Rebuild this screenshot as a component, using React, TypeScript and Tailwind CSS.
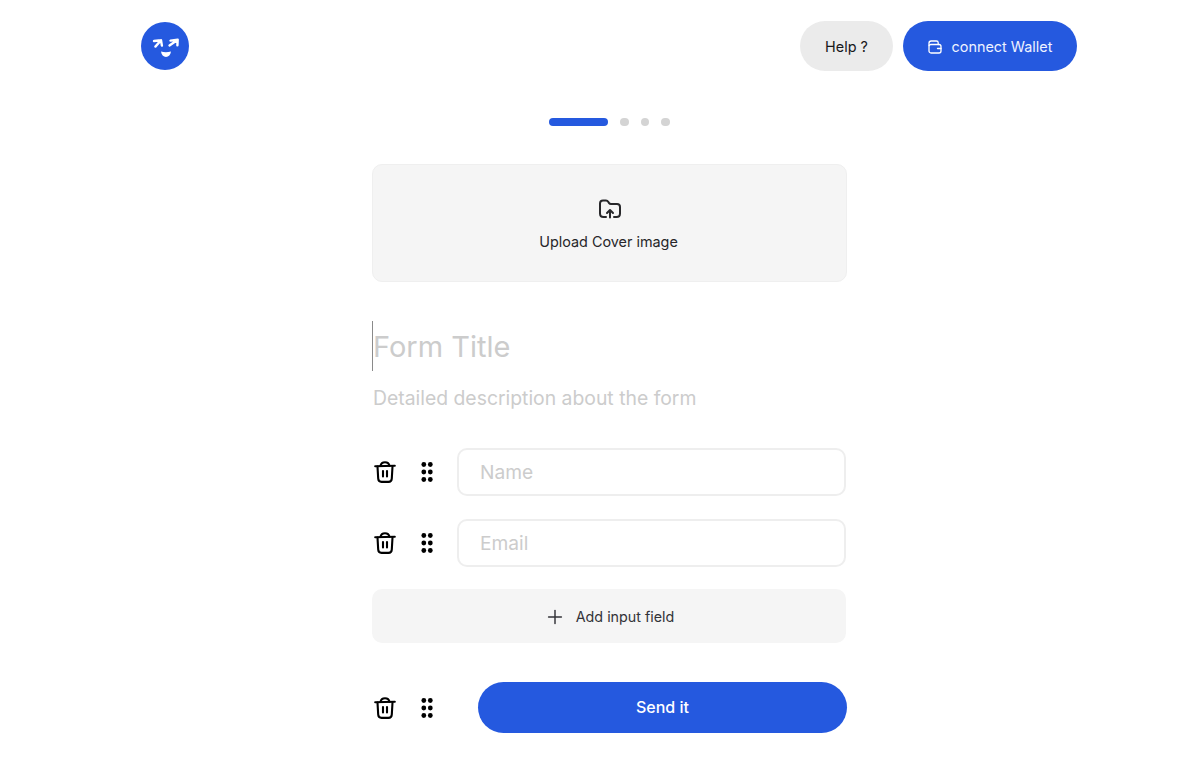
import { Plus } from 'lucide-react';

function Logo() {
  return (
    <svg width="48" height="48" viewBox="0 0 48 48" fill="none">
      <circle cx="24" cy="24" r="24" fill="#2559df" />
      <g stroke="#fff" strokeWidth="2.4" strokeLinecap="round" strokeLinejoin="round">
        <path d="M13 19l7-.8M20 18.2l.9 5.4M20 18.2l-5.6 6.4" />
        <path d="M29.5 18.6l7.2-.8M36.7 17.8l-.3 5.6M36.7 17.8l-8.2 5.6" />
      </g>
      <path d="M20 29.5c3.2.9 6.4.9 10 0-.4 3.400-2.400 5.500-5 5.500s-4.600-2.100-5-5.500z" fill="#fff" />
    </svg>
  );
}

function Trash() {
  return (
    <svg width="22" height="22" viewBox="0 0 22 22" fill="none" stroke="#000" strokeWidth="2.100" strokeLinecap="round" strokeLinejoin="round">
      <path d="M1.200 5.200L20.800 4.800" />
      <path d="M6.500 4.800C7 2.500 8.500 1.300 11 1.300s4 1.200 4.500 3.500" />
      <path d="M3.500 5.500l.7 12c.1 2.100 1.300 3.400 3.300 3.400h7c2 0 3.200-1.300 3.300-3.400l.7-12" />
      <path d="M9 10v5.500M13 10v5.500" />
    </svg>
  );
}

function Grip() {
  return (
    <svg width="12" height="20" viewBox="0 0 12 20" fill="#000">
      <circle cx="2.800" cy="2.500" r="2.400" />
      <circle cx="9.300" cy="2.500" r="2.400" />
      <circle cx="2.800" cy="10" r="2.400" />
      <circle cx="9.300" cy="10" r="2.400" />
      <circle cx="2.800" cy="17.500" r="2.400" />
      <circle cx="9.300" cy="17.500" r="2.400" />
    </svg>
  );
}

function FolderUp() {
  return (
    <svg width="24" height="24" viewBox="0 0 24 24" fill="none" stroke="#27272a" strokeWidth="2" strokeLinecap="round" strokeLinejoin="round">
      <path d="M8 20H5.500C3.500 20 2 18.500 2 16.500V6.500C2 4.700 3.200 3.500 5 3.500h3c1 0 1.700.4 2.200 1.200l.9 1.400c.4.600 1 .900 1.900.900h6c1.800 0 3 1.200 3 3v6.500c0 2-1.500 3.500-3.500 3.500H16" />
      <path d="M12 20.500v-7M9 16l3-3 3 3" />
    </svg>
  );
}

function WalletIcon() {
  return (
    <svg width="14" height="14" viewBox="0 0 14 14" fill="none" stroke="#fff" strokeWidth="1.300" strokeLinecap="round" strokeLinejoin="round">
      <path d="M1 5.500V3.200C1 1.900 1.900 1 3.200 1h5.200c1.100 0 1.800.7 1.800 1.800v1.700" />
      <rect x="1" y="4.500" width="12" height="8.500" rx="2" />
      <path d="M9.500 8.500H13" />
    </svg>
  );
}

function RowControls() {
  return (
    <div className="flex items-center shrink-0">
      <div className="w-[22px] ml-[2px] flex justify-center"><Trash /></div>
      <div className="ml-[25px] flex"><Grip /></div>
    </div>
  );
}

function Field({ placeholder }: { placeholder: string }) {
  return (
    <div className="flex items-center mr-[1px]">
      <RowControls />
      <div className="ml-[24px] flex-1 h-[48px] border-2 border-[#eeeeee] rounded-[10px] pl-[21px] pt-[1px] flex items-center text-[19.2px] text-[#cccccc]">
        {placeholder}
      </div>
    </div>
  );
}

export default function App() {
  return (
    <div className="min-h-screen bg-white font-['Inter',sans-serif]">
      <header className="pt-[21px] pl-[141px] pr-[122px] flex items-center justify-between">
        <Logo />
        <div className="flex items-center gap-[10px]">
          <button className="w-[93px] h-[50px] pt-[1px] rounded-full bg-[#ebebeb] text-[#18181b] text-[14.4px]">Help ?</button>
          <button className="w-[174px] h-[50px] pt-[1px] rounded-full bg-[#2559df] text-[#eef2ff] text-[14.4px] flex items-center justify-center gap-[10px]">
            <WalletIcon /> connect Wallet
          </button>
        </div>
      </header>

      <main className="ml-[372px] w-[475px]">
        <div className="mt-[47px] flex items-center justify-center gap-[12px]">
          <span className="w-[59px] h-[8px] rounded-full bg-[#2559df]" />
          <span className="w-[8.5px] h-[8px] rounded-full bg-[#d4d4d4]" />
          <span className="w-[8.5px] h-[8px] rounded-full bg-[#d4d4d4]" />
          <span className="w-[8.5px] h-[8px] rounded-full bg-[#d4d4d4]" />
        </div>

        <div className="mt-[38px] h-[118px] rounded-[10px] bg-[#f5f5f5] border border-[#efefef] flex flex-col items-center pt-[32px]">
          <FolderUp />
          <div className="mt-[11px] mr-[2px] text-[14.4px] leading-[20px] text-[#27272a]">Upload Cover image</div>
        </div>

        <div className="mt-[39px] h-[50px] border-l border-[#8a8a8a] pt-[2px] flex items-center text-[29px] text-[#cccccc]">
          Form Title
        </div>
        <div className="mt-[14px] pl-[1px] text-[19.36px] leading-[26px] text-[#cccccc]">
          Detailed description about the form
        </div>

        <div className="mt-[37px] flex flex-col gap-[23px]">
          <Field placeholder="Name" />
          <Field placeholder="Email" />
        </div>

        <div className="mt-[22px] mr-[1px] h-[54px] rounded-[10px] bg-[#f5f5f5] pt-[1px] flex items-center justify-center gap-[10px] text-[14.3px] text-[#333338]">
          <Plus size={22} strokeWidth={1.600} /> Add input field
        </div>

        <div className="mt-[39px] flex items-center">
          <RowControls />
          <button className="ml-[45px] flex-1 h-[51px] pb-[1px] rounded-full bg-[#2559df] text-white text-[16px] font-medium">Send it</button>
        </div>
      </main>
    </div>
  );
}
